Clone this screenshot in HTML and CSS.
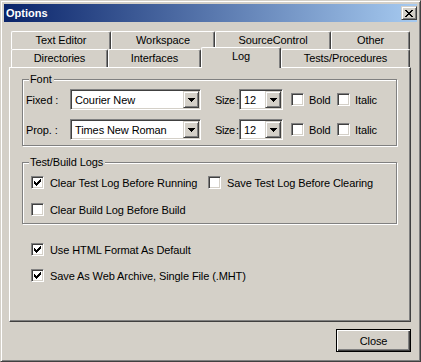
FILE: index.html
```html
<!DOCTYPE html>
<html>
<head>
<meta charset="utf-8">
<title>Options</title>
<link rel="stylesheet" href="styles.css">
</head>
<body>
<div class="window">
  <div class="titlebar">
    <span class="title">Options</span>
    <div class="xbtn">
      <svg width="8" height="7" viewBox="0 0 8 7" shape-rendering="crispEdges"><path fill="#000" d="M0 0h2v1H0zM6 0h2v1H6zM1 1h2v1H1zM5 1h2v1H5zM2 2h4v1H2zM3 3h2v1H3zM2 4h4v1H2zM1 5h2v1H1zM5 5h2v1H5zM0 6h2v1H0zM6 6h2v1H6z"/></svg>
    </div>
  </div>
  <div class="client">
    <div class="tabctl">
      <div class="tabrow">
        <div class="tab" style="width:100px">Text Editor</div>
        <div class="tab" style="width:104px">Workspace</div>
        <div class="tab" style="width:116px">SourceControl</div>
        <div class="tab" style="width:79px">Other</div>
      </div>
      <div class="tabrow">
        <div class="tab" style="width:97px">Directories</div>
        <div class="tab" style="width:93px">Interfaces</div>
        <div class="tab selected" style="width:80px">Log</div>
        <div class="tab" style="width:129px">Tests/Procedures</div>
      </div>
      <div class="panel">
        <div class="group font-group">
          <div class="legend">Font</div>
          <div class="frow first">
            <span class="flabel">Fixed :</span>
            <div class="combo wide"><span class="ctext">Courier New</span><div class="dd"><svg width="7" height="4" viewBox="0 0 7 4" shape-rendering="crispEdges"><path fill="#000" d="M0 0h7v1H0zM1 1h5v1H1zM2 2h3v1H2zM3 3h1v1H3z"/></svg></div></div>
            <span class="slabel">Size :</span>
            <div class="combo narrow"><span class="ctext">12</span><div class="dd"><svg width="7" height="4" viewBox="0 0 7 4" shape-rendering="crispEdges"><path fill="#000" d="M0 0h7v1H0zM1 1h5v1H1zM2 2h3v1H2zM3 3h1v1H3z"/></svg></div></div>
            <span class="cb fcb"></span><span class="blabel">Bold</span>
            <span class="cb"></span><span class="ilabel">Italic</span>
          </div>
          <div class="frow second">
            <span class="flabel">Prop. :</span>
            <div class="combo wide"><span class="ctext">Times New Roman</span><div class="dd"><svg width="7" height="4" viewBox="0 0 7 4" shape-rendering="crispEdges"><path fill="#000" d="M0 0h7v1H0zM1 1h5v1H1zM2 2h3v1H2zM3 3h1v1H3z"/></svg></div></div>
            <span class="slabel">Size :</span>
            <div class="combo narrow"><span class="ctext">12</span><div class="dd"><svg width="7" height="4" viewBox="0 0 7 4" shape-rendering="crispEdges"><path fill="#000" d="M0 0h7v1H0zM1 1h5v1H1zM2 2h3v1H2zM3 3h1v1H3z"/></svg></div></div>
            <span class="cb fcb"></span><span class="blabel">Bold</span>
            <span class="cb"></span><span class="ilabel">Italic</span>
          </div>
        </div>

        <div class="group log-group">
          <div class="legend">Test/Build Logs</div>
          <div class="crow first">
            <div class="citem w177"><span class="cb checked"><svg width="7" height="7" viewBox="0 0 7 7" shape-rendering="crispEdges"><path fill="#000" d="M6 0h1v1H6zM5 1h2v1H5zM0 2h1v1H0zM4 2h3v1H4zM0 3h2v1H0zM3 3h3v1H3zM0 4h5v1H0zM1 5h3v1H1zM2 6h1v1H2z"/></svg></span><span>Clear Test Log Before Running</span></div>
            <div class="citem"><span class="cb"></span><span>Save Test Log Before Clearing</span></div>
          </div>
          <div class="crow second">
            <div class="citem"><span class="cb"></span><span>Clear Build Log Before Build</span></div>
          </div>
        </div>

        <div class="crow solo first-solo">
          <div class="citem"><span class="cb checked"><svg width="7" height="7" viewBox="0 0 7 7" shape-rendering="crispEdges"><path fill="#000" d="M6 0h1v1H6zM5 1h2v1H5zM0 2h1v1H0zM4 2h3v1H4zM0 3h2v1H0zM3 3h3v1H3zM0 4h5v1H0zM1 5h3v1H1zM2 6h1v1H2z"/></svg></span><span>Use HTML Format As Default</span></div>
        </div>
        <div class="crow solo second-solo">
          <div class="citem"><span class="cb checked"><svg width="7" height="7" viewBox="0 0 7 7" shape-rendering="crispEdges"><path fill="#000" d="M6 0h1v1H6zM5 1h2v1H5zM0 2h1v1H0zM4 2h3v1H4zM0 3h2v1H0zM3 3h3v1H3zM0 4h5v1H0zM1 5h3v1H1zM2 6h1v1H2z"/></svg></span><span>Save As Web Archive, Single File (.MHT)</span></div>
        </div>
      </div>
    </div>
    <div class="footer">
      <div class="btn default">Close</div>
    </div>
  </div>
</div>
</body>
</html>
```

FILE: styles.css
```css
* { box-sizing: border-box; }
html, body { margin: 0; padding: 0; }
body {
  width: 421px;
  height: 362px;
  overflow: hidden;
  background: #d4d0c8;
  font-family: "Liberation Sans", Arial, sans-serif;
  font-size: 11px;
  letter-spacing: -0.1px;
  color: #000;
}

.window {
  width: 421px;
  height: 362px;
  background: #d4d0c8;
  border: 1px solid;
  border-color: #d4d0c8 #404040 #404040 #d4d0c8;
  box-shadow: inset 1px 1px 0 #fff, inset -1px -1px 0 #808080;
  padding: 3px;
  display: flex;
  flex-direction: column;
}

.titlebar {
  height: 18px;
  flex: none;
  display: flex;
  align-items: center;
  justify-content: space-between;
  background: linear-gradient(to right, #0a246a, #a6caf0);
  padding: 0 0 0 2px;
}
.title {
  color: #fff;
  font-weight: bold;
  font-size: 11px;
  letter-spacing: 0;
  line-height: 18px;
}
.xbtn {
  width: 16px;
  height: 14px;
  background: #d4d0c8;
  border: 1px solid;
  border-color: #d4d0c8 #404040 #404040 #d4d0c8;
  box-shadow: inset 1px 1px 0 #fff, inset -1px -1px 0 #808080;
  display: flex;
  align-items: center;
  justify-content: center;
}
.xbtn svg { display: block; }

.client {
  flex: 1;
  padding: 9px 6px 0 5px;
  display: flex;
  flex-direction: column;
}

.tabctl { display: flex; flex-direction: column; }
.tabrow {
  display: flex;
  height: 18px;
  padding-left: 2px;
  align-items: flex-start;
}
.tab {
  height: 18px;
  background: #d4d0c8;
  border-top: 1px solid #fff;
  border-left: 1px solid #fff;
  border-right: 1px solid #404040;
  border-radius: 2px 2px 0 0;
  box-shadow: inset -1px 0 0 #808080;
  text-align: center;
  line-height: 17px;
  white-space: nowrap;
}
.tab.selected {
  margin-top: -2px;
  height: 21px;
  position: relative;
  z-index: 1;
}

.panel {
  height: 255px;
  background: #d4d0c8;
  border: 1px solid;
  border-color: #fff #404040 #404040 #fff;
  box-shadow: inset -1px -1px 0 #808080;
  padding: 0 0 0 12px;
  display: flex;
  flex-direction: column;
  align-items: flex-start;
}

.group {
  width: 375px;
  border: 1px solid #808080;
  box-shadow: inset 1px 1px 0 #fff, 1px 1px 0 #fff;
  display: flex;
  flex-direction: column;
  align-items: flex-start;
}
.font-group { margin-top: 11px; padding-bottom: 5px; }
.log-group { margin-top: 16px; padding-bottom: 7px; padding-left: 8px; }

.legend {
  margin: -7px 0 0 6px;
  padding: 0 2px 0 1px;
  height: 13px;
  line-height: 13px;
  background: #d4d0c8;
  white-space: nowrap;
}
.log-group .legend { margin-left: -2px; }

.frow {
  display: flex;
  align-items: center;
  height: 21px;
  padding-left: 3px;
  white-space: nowrap;
}
.frow.first { margin-top: 3px; }
.frow.second { margin-top: 9px; }
.flabel { width: 44px; flex: none; }
.slabel {
  flex: none;
  width: 24px;
  margin-left: 14px;
  letter-spacing: -0.4px;
  word-spacing: -1.5px;
}
.blabel { width: 28px; flex: none; }

.combo {
  height: 21px;
  flex: none;
  background: #fff;
  border: 1px solid;
  border-color: #808080 #fff #fff #808080;
  box-shadow: inset 1px 1px 0 #404040, inset -1px -1px 0 #d4d0c8;
  padding: 1px;
  display: flex;
  align-items: center;
}
.combo.wide { width: 131px; }
.combo.narrow { width: 44px; }
.ctext { flex: 1; padding-left: 3px; overflow: hidden; }
.dd {
  width: 16px;
  height: 17px;
  flex: none;
  background: #d4d0c8;
  border: 1px solid;
  border-color: #d4d0c8 #404040 #404040 #d4d0c8;
  box-shadow: inset 1px 1px 0 #fff, inset -1px -1px 0 #808080;
  display: flex;
  align-items: center;
  justify-content: center;
}
.dd svg { display: block; }

.cb {
  width: 13px;
  height: 13px;
  flex: none;
  background: #fff;
  border: 1px solid;
  border-color: #808080 #fff #fff #808080;
  box-shadow: inset 1px 1px 0 #404040, inset -1px -1px 0 #d4d0c8;
  margin-right: 5px;
  display: block;
}
.cb svg { display: block; margin: 2px 0 0 2px; }
.fcb { margin-left: 8px; }

.crow {
  display: flex;
  align-items: center;
  height: 13px;
  white-space: nowrap;
}
.crow .cb { margin-right: 6px; }
.citem { display: flex; align-items: center; }
.w177 { width: 177px; }
.log-group .crow.first { margin-top: 7px; }
.log-group .crow.second { margin-top: 14px; }
.crow.solo { margin-left: 9px; }
.first-solo { margin-top: 19px; }
.second-solo { margin-top: 13px; }

.footer {
  display: flex;
  justify-content: flex-end;
  padding-top: 7px;
}
.btn {
  width: 75px;
  height: 23px;
  background: #d4d0c8;
  display: flex;
  align-items: center;
  justify-content: center;
}
.btn.default {
  border: 1px solid #000;
  box-shadow: inset 1px 1px 0 #fff, inset -1px -1px 0 #404040, inset -2px -2px 0 #808080;
}
```
